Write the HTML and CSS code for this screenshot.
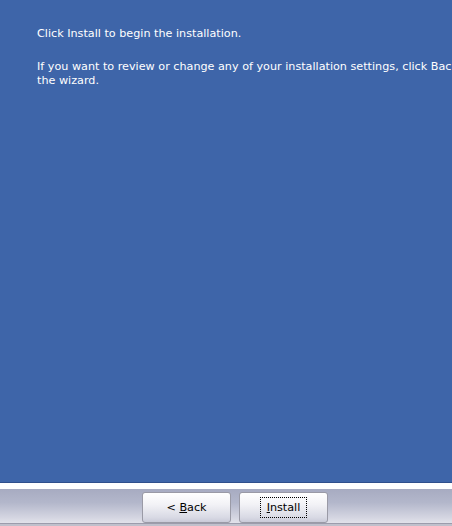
FILE: index.html
```html
<!DOCTYPE html>
<html>
<head>
<meta charset="utf-8">
<link rel="stylesheet" href="styles.css">
</head>
<body>
<div class="page">
  <div class="content">
    <div class="text">
      <p class="p1">Click Install to begin the installation.</p>
      <p class="p2">If you want to review or change any of your installation settings, click Back. Click Cancel to exit<br>the wizard.</p>
    </div>
  </div>
  <div class="sep"></div>
  <div class="bar">
    <button class="btn"><span class="lbl">&lt; <u>B</u>ack</span></button>
    <button class="btn"><span class="lbl focus"><u>I</u>nstall</span></button>
  </div>
  <div class="bottom"></div>
</div>
</body>
</html>
```
FILE: styles.css
```css
html, body {
  margin: 0;
  padding: 0;
  width: 452px;
  height: 526px;
  overflow: hidden;
}
body {
  font-family: "DejaVu Sans", sans-serif;
  font-size: 11.2px;
  background: #ffffff;
}
.page {
  display: flex;
  flex-direction: column;
  height: 526px;
}
.content {
  height: 482px;
  background: #3e65a9;
  border-bottom: 1px solid #2f4f8c;
  overflow: hidden;
}
.text {
  padding: 27px 0 0 37px;
  color: #ffffff;
  line-height: 14px;
  white-space: nowrap;
}
.text p { margin: 0; }
.p2 { margin-top: 19px !important; }
.sep {
  height: 6px;
  background: #ffffff;
}
.bar {
  height: 34px;
  background: linear-gradient(#a7abc1 0%, #b3b7cb 40%, #d5d6e2 85%, #e2e2ea 100%);
  display: flex;
  align-items: flex-start;
  padding: 3px 0 0 142px;
  gap: 8px;
  box-sizing: border-box;
}
.btn {
  width: 89px;
  height: 31px;
  border: 1px solid #9a9aa6;
  border-radius: 3px;
  background: linear-gradient(#ffffff 0%, #f2f2f6 40%, #d8d9e4 85%, #c9cad8 100%);
  font-family: inherit;
  font-size: 11.2px;
  color: #000000;
  padding: 0;
  display: flex;
  align-items: center;
  justify-content: center;
}
.lbl {
  padding: 2px 3px;
  border: 1px dotted transparent;
}
.focus {
  border-color: #000000;
  padding: 3px 6px 3px 6px;
}
.bottom {
  flex: 1;
  background: #c0c0cc;
  border-top: 1px solid #9c9cac;
}
```
